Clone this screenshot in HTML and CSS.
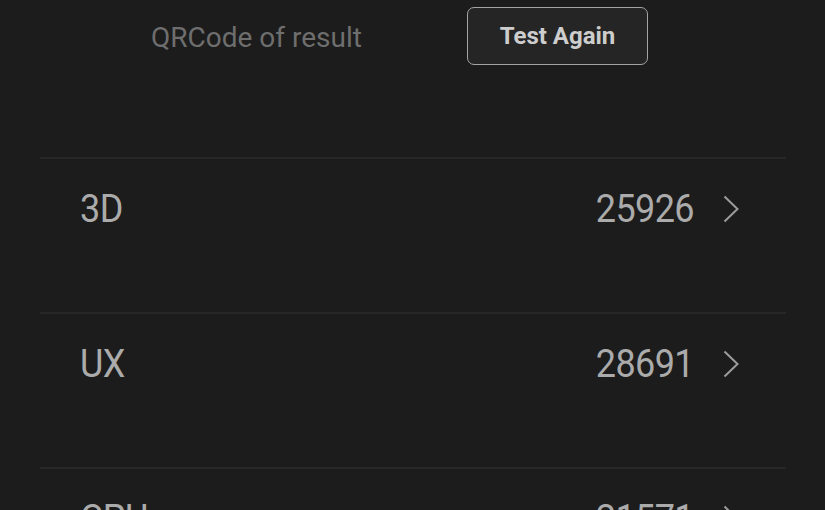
FILE: index.html
```html
<html>
<head>
	<link rel="stylesheet" href="styles.css">
</head>
<body>
	<div class="header">
		<span class="qr-link">QRCode of result</span>
		<button class="again">Test Again</button>
	</div>

	<div class="scores">
		<div class="score-row">
			<span class="score-name">3D</span>
			<span class="score-value">25926</span>
			<svg class="chevron" viewBox="0 0 16 28"><path d="M1.5 1.5 L14.5 14 L1.5 26.5"/></svg>
		</div>
		<div class="score-row">
			<span class="score-name">UX</span>
			<span class="score-value">28691</span>
			<svg class="chevron" viewBox="0 0 16 28"><path d="M1.5 1.5 L14.5 14 L1.5 26.5"/></svg>
		</div>
		<div class="score-row">
			<span class="score-name">CPU</span>
			<span class="score-value">21571</span>
			<svg class="chevron" viewBox="0 0 16 28"><path d="M1.5 1.5 L14.5 14 L1.5 26.5"/></svg>
		</div>
	</div>
</body>
</html>
```

FILE: styles.css
```css
body{
	margin: 0;
	background: #1c1c1c;
	font-family: Roboto, "Liberation Sans", sans-serif;
	overflow: hidden;
}

.header{
	display: flex;
	align-items: flex-start;
	height: 157px;
	padding-left: 151px;
	box-sizing: border-box;
}
.qr-link{
	margin-top: 21px;
	font-size: 28px;
	line-height: 34px;
	color: #6e6e6e;
	width: 316px;
}
.again{
	margin-top: 7px;
	width: 181px;
	height: 58px;
	background: #252525;
	border: 1px solid #a3a3a3;
	border-radius: 7px;
	color: #cdcdcd;
	font-family: Roboto, "Liberation Sans", sans-serif;
	font-weight: bold;
	font-size: 24px;
	padding: 0;
}

.scores{
	margin: 0 39px 0 40px;
}
.score-row{
	display: flex;
	align-items: center;
	height: 155px;
	box-sizing: border-box;
	border-top: 2px solid #272727;
	padding: 0 47px 83px 40px;
	padding-top: 30px;
}
.score-name,
.score-value{
	font-size: 36px;
	line-height: 40px;
	color: #ababab;
	letter-spacing: -0.6px;
	display: inline-block;
	transform: scaleY(1.08);
}
.score-name{
	flex: 1;
}
.chevron{
	width: 16px;
	height: 28px;
	margin-left: 29px;
	fill: none;
	stroke: #9c9c9c;
	stroke-width: 2;
}
```
